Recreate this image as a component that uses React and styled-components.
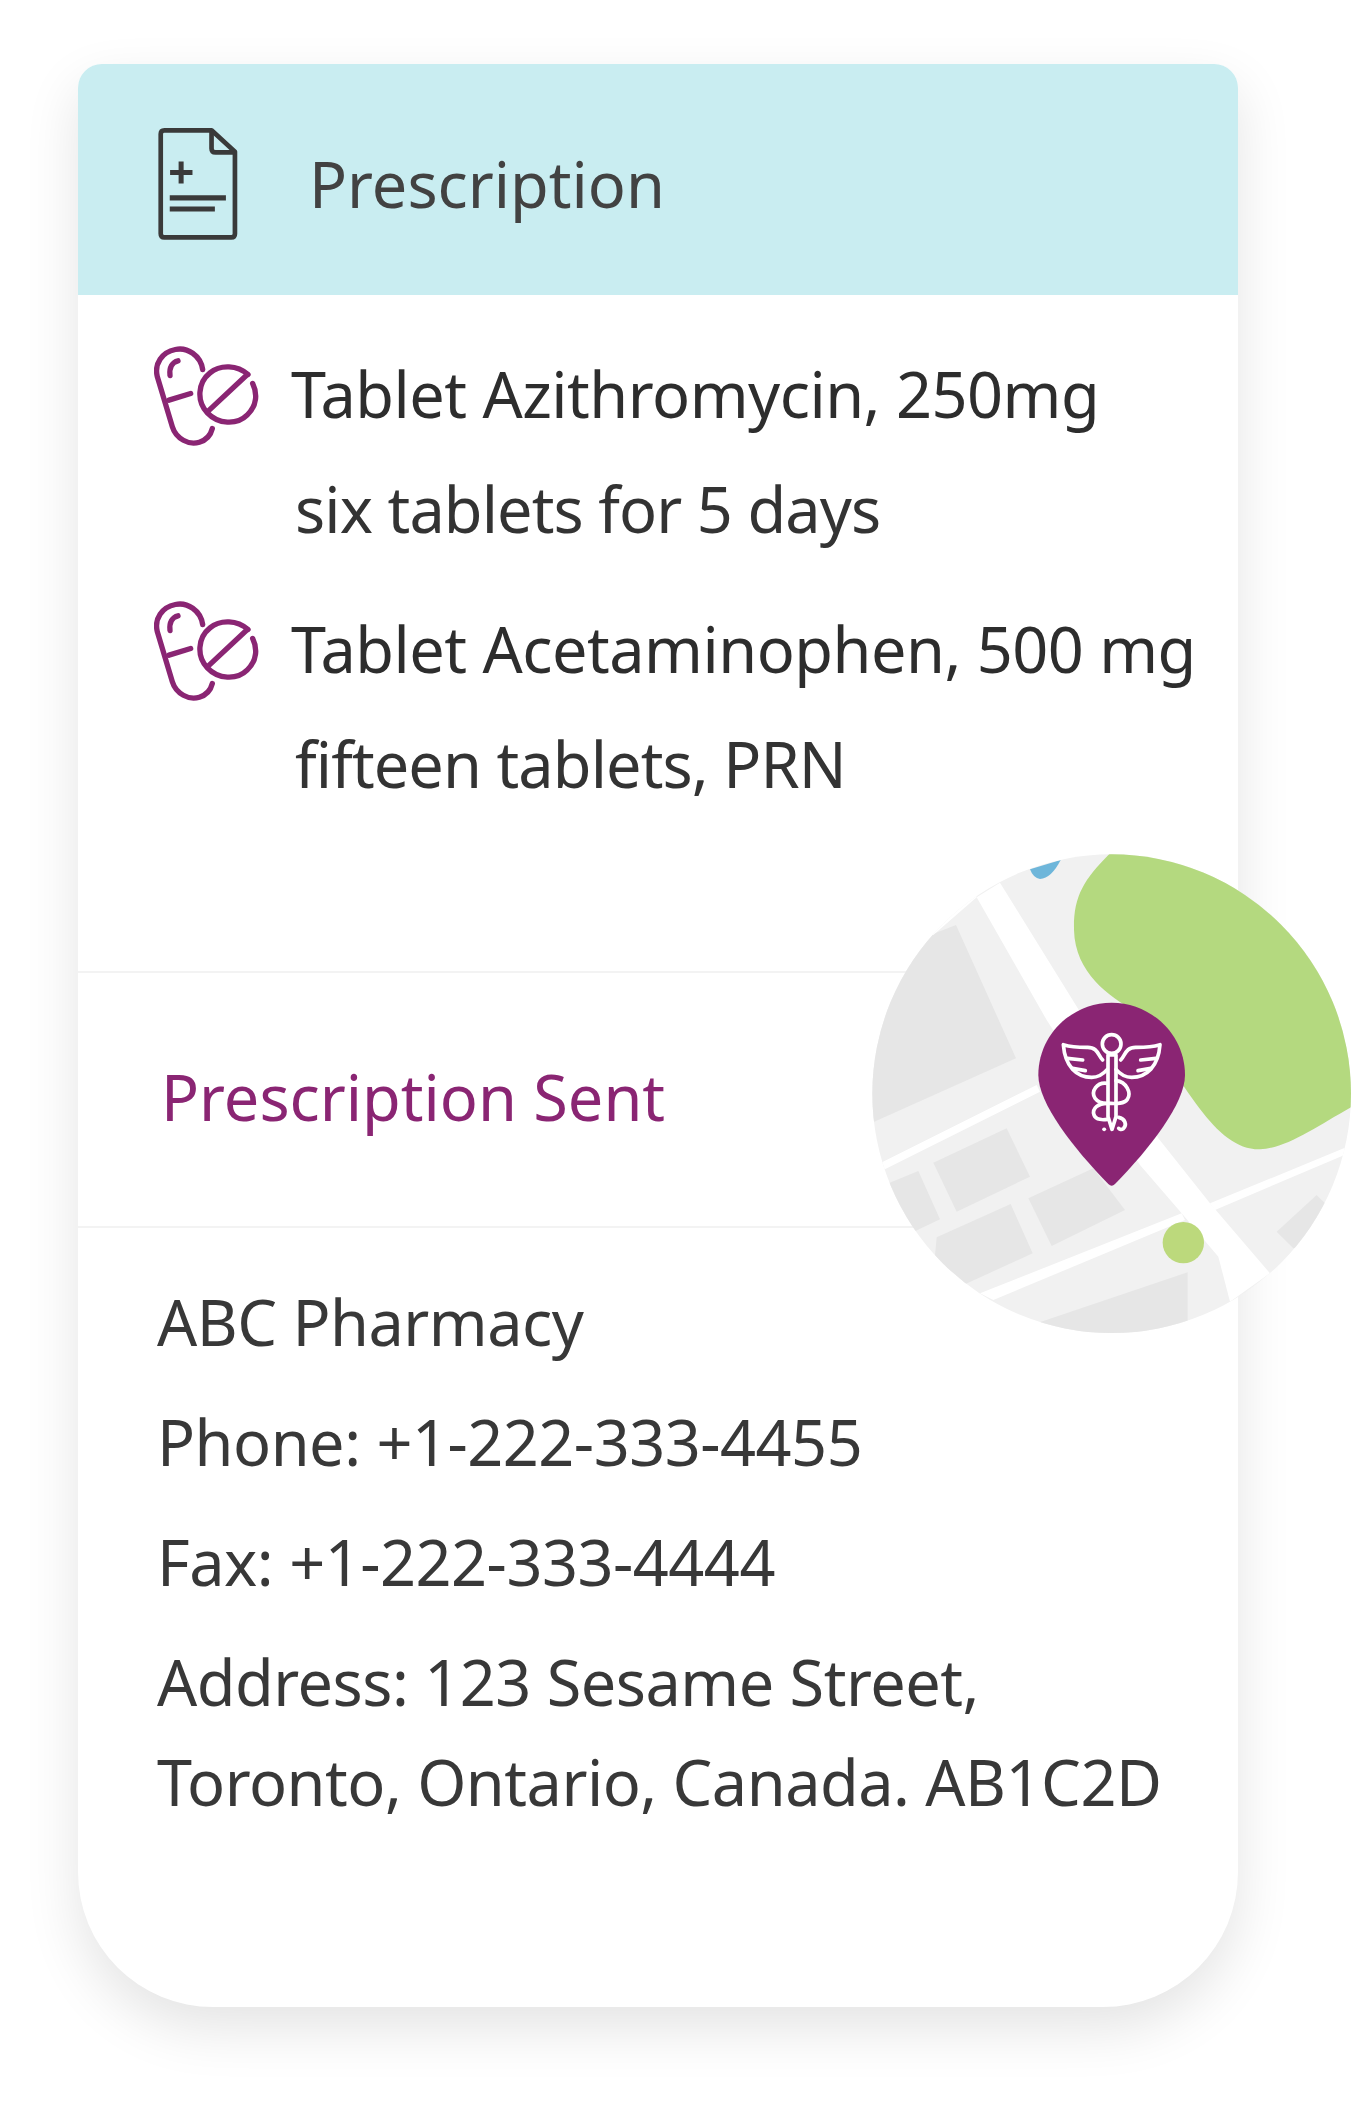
import React from "react";
import styled, { createGlobalStyle } from "styled-components";

const GlobalStyle = createGlobalStyle`
  html, body {
    margin: 0;
    background: #ffffff;
  }
`;

const Page = styled.div`
  box-sizing: border-box;
  width: 1358px;
  height: 2107px;
  padding: 64px 120px 0 78px;
  font-family: "Noto Sans", "Lato", sans-serif;
  font-size: 63px;
  overflow: hidden;
`;

const Card = styled.div`
  position: relative;
  height: 1943px;
  border-radius: 24px 24px 135px 135px;
  background: #ffffff;
  box-shadow: 0 22px 55px rgba(0, 0, 0, 0.11);
`;

const Header = styled.header`
  display: flex;
  align-items: center;
  gap: 70px;
  height: 231px;
  padding: 8px 0 0 79px;
  box-sizing: border-box;
  border-radius: 24px 24px 0 0;
  background: #c9edf1;
`;

const HeaderTitle = styled.h1`
  margin: 0;
  font-size: 63px;
  font-weight: 400;
  color: #424242;
`;

const Items = styled.div`
  display: flex;
  flex-direction: column;
  gap: 25px;
  height: 676px;
  box-sizing: border-box;
  padding: 41px 0 0 76px;
`;

const Item = styled.div`
  display: grid;
  grid-template-columns: 137px 1fr;
  line-height: 115px;
  letter-spacing: -0.5px;
  color: #2d2d2d;
  white-space: nowrap;

  svg {
    margin-top: 9px;
  }
`;

const ItemNote = styled.div`
  grid-column: 2;
  padding-left: 4px;
  letter-spacing: -0.9px;
  color: #333333;
`;

const Status = styled.div`
  display: flex;
  align-items: center;
  height: 257px;
  box-sizing: border-box;
  padding: 0 0 7px 83px;
  border-top: 2px solid #f3f3f3;
  border-bottom: 2px solid #f3f3f3;
  color: #8a2573;
`;

const Contact = styled.div`
  display: flex;
  flex-direction: column;
  gap: 20px;
  padding: 44px 0 0 79px;
  line-height: 100px;
  letter-spacing: -0.5px;
  color: #383838;
  white-space: nowrap;
`;

const MapArt = styled.svg`
  position: absolute;
  left: 772px;
  top: 776px;
`;

function DocIcon() {
  return (
    <svg width="82" height="117" viewBox="50 45 245 350" fill="none" stroke="#3a3a3a" strokeWidth="14" strokeLinejoin="round">
      <path d="M213 61 H72 Q61 61 61 72 V370 Q61 381 72 381 H272 Q283 381 283 370 V125 Z" />
      <path d="M213 61 V115 Q213 127 225 127 H283" />
      <path d="M89 187 H156 M122 154 V220" strokeWidth="15" />
      <path d="M88 263 H256" strokeWidth="15" />
      <path d="M88 296 H223" strokeWidth="15" />
    </svg>
  );
}

function PillIcon() {
  return (
    <svg width="105" height="102" viewBox="40 45 315 305" fill="none" stroke="#8a2573" strokeWidth="16" strokeLinecap="round" strokeLinejoin="round">
      <path d="M186 118 C180 76 140 50 104 58 C64 66 40 100 50 140 L95 290 C106 326 145 346 176 336 C196 330 210 315 215 295" />
      <path d="M85 210 L150 190" />
      <path d="M88 136 C85 112 95 96 112 92" />
      <path d="M322 133 C290 105 240 102 208 128 C170 158 168 215 200 248 C232 282 288 286 320 254 C350 226 350 188 336 160" />
      <path d="M320 133 L200 245" />
    </svg>
  );
}

function MapBadge() {
  return (
    <MapArt width="508" height="510" viewBox="0 0 1524 1530">
      <defs>
        <clipPath id="map-circle">
          <circle cx="785" cy="761" r="718" />
        </clipPath>
      </defs>
      <circle cx="785" cy="761" r="718" fill="#f1f1f1" />
      <g clipPath="url(#map-circle)">
        <g fill="#e6e6e6">
          <polygon points="318,255 498,655 40,860 0,600 100,340" />
          <polygon points="250,968 470,865 540,1010 320,1115" />
          <polygon points="90,1040 205,993 270,1138 160,1190" />
          <polygon points="260,1192 482,1092 548,1240 340,1335 250,1300" />
          <polygon points="535,1075 730,985 825,1110 605,1218" />
          <polygon points="1280,1175 1400,1065 1425,1090 1500,1200 1330,1225" />
          <polygon points="560,1450 1013,1297 1013,1530 560,1530" />
        </g>
        <g fill="#ffffff">
          <polygon points="380,172 450,128 925,895 1080,1090 1260,1300 1140,1385 1105,1250 995,1120 870,975 590,540" />
          <polygon points="60,985 560,735 570,755 70,1005" />
          <polygon points="1080,1090 1530,905 1530,925 1095,1110" />
          <polygon points="390,1360 995,1120 1005,1140 430,1380" />
          <polygon points="1140,1385 1400,1240 1524,1300 1524,1530 1160,1530 1160,1375" />
          <polygon points="340,0 380,172 250,285 100,240" />
        </g>
        <path d="M780 40 C700 120 670 170 672 270 C675 400 780 470 850 510 C1000 720 1090 930 1230 928 C1310 925 1400 860 1503 802 L1600 800 L1600 0 Z" fill="#b4d97f" />
        <path d="M540 88 L632 60 Q604 115 570 117 Q550 115 540 88 Z" fill="#6eb6da" />
        <circle cx="1000" cy="1208" r="62" fill="#bcd97c" />
      </g>
      <path d="M785 488 C905 488 1005 585 1005 705 C1005 790 900 925 795 1032 Q785 1042 775 1032 C670 925 565 790 565 705 C565 585 665 488 785 488 Z" fill="#8a2573" />
      <g fill="none" stroke="#ffffff" strokeWidth="11" strokeLinecap="round" strokeLinejoin="round">
        <circle cx="785" cy="612" r="28" />
        <path d="M774 645 V830 L786 868 L798 830 V645 Z" />
        <path d="M758 660 C745 650 745 620 710 622 C690 622 660 620 640 614 C645 680 680 712 725 712 C745 712 760 702 772 688" />
        <path d="M812 660 C825 650 825 620 860 622 C880 622 910 620 930 614 C925 680 890 712 845 712 C825 712 810 702 798 688" />
        <path d="M652 655 L698 660 M668 685 L706 692 M918 655 L872 660 M902 685 L864 692" />
        <path d="M772 730 C740 725 722 755 735 775 C745 790 760 790 772 790 M798 722 C830 725 845 760 832 778 C820 795 790 790 772 790 C745 790 725 805 732 825 C738 840 760 840 772 838" />
        <path d="M806 832 C825 835 832 855 820 866 C814 870 808 868 806 865" />
        <path d="M762 868 L763 868" />
      </g>
    </MapArt>
  );
}

export default function App() {
  return (
    <Page>
      <GlobalStyle />
      <Card>
        <Header>
          <DocIcon />
          <HeaderTitle>Prescription</HeaderTitle>
        </Header>
        <Items>
          <Item>
            <PillIcon />
            <div>Tablet Azithromycin, 250mg</div>
            <ItemNote>six tablets for 5 days</ItemNote>
          </Item>
          <Item>
            <PillIcon />
            <div>Tablet Acetaminophen, 500 mg</div>
            <ItemNote>fifteen tablets, PRN</ItemNote>
          </Item>
        </Items>
        <Status>Prescription Sent</Status>
        <Contact>
          <div>ABC Pharmacy</div>
          <div>Phone: +1-222-333-4455</div>
          <div>Fax: +1-222-333-4444</div>
          <div>
            Address: 123 Sesame Street,
            <br />
            Toronto, Ontario, Canada. AB1C2D
          </div>
        </Contact>
        <MapBadge />
      </Card>
    </Page>
  );
}
